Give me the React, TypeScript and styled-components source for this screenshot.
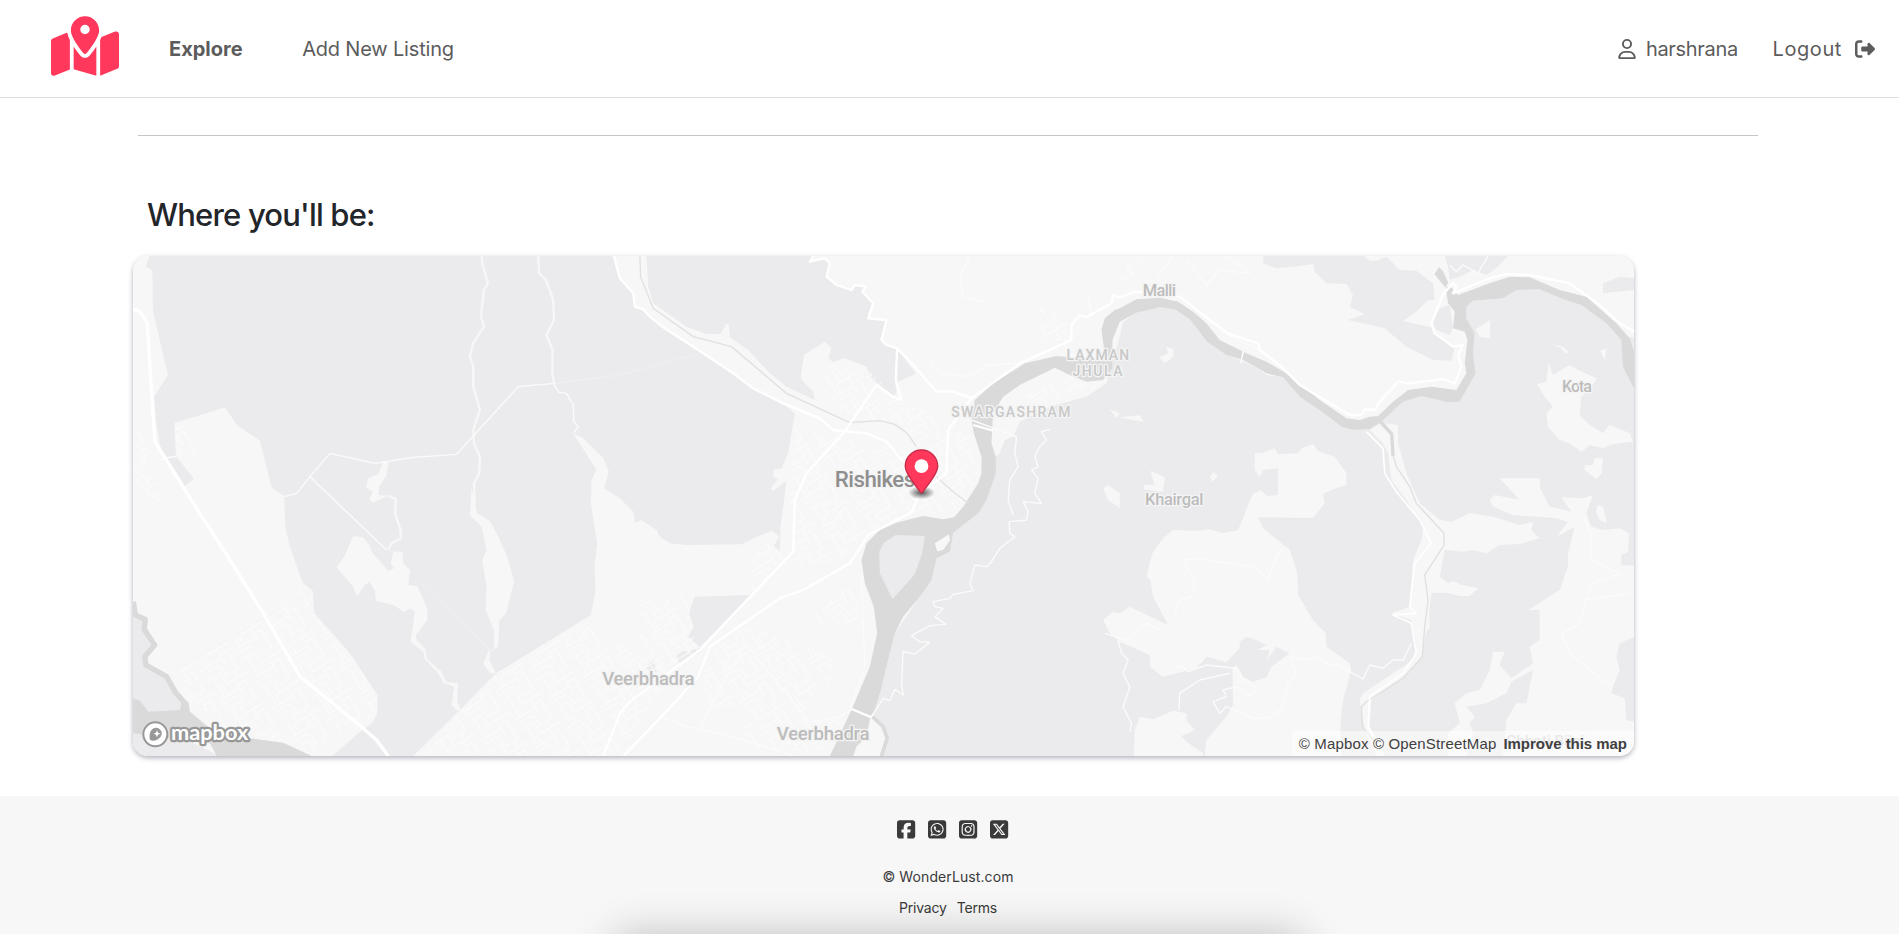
import React from "react";
import styled, { createGlobalStyle } from "styled-components";
import {
  FaMapLocationDot,
  FaRegUser,
  FaRightFromBracket,
  FaSquareFacebook,
  FaSquareInstagram,
  FaSquareWhatsapp,
  FaSquareXTwitter,
} from "react-icons/fa6";

const GlobalStyle = createGlobalStyle`
  *, *::before, *::after { box-sizing: border-box; }
  html, body { margin: 0; height: 100%; background: #fff; overflow: hidden; }
  body { font-family: Inter, "Liberation Sans", sans-serif; color: #222529; }
  a { color: inherit; text-decoration: none; }
`;

const Page = styled.div`
  position: relative;
  display: flex;
  flex-direction: column;
  height: 934px;
  overflow: hidden;
`;

const Navbar = styled.nav`
  display: flex;
  align-items: center;
  height: 98px;
  padding: 0 24px 0 51px;
  border-bottom: 1px solid #dfdfe0;
  background: #fff;
  flex: none;
`;

const Brand = styled.a`
  display: flex;
  width: 68px;
  height: 61px;
  margin: 0 50px 4px 0;
  color: #ff385c;
  svg { width: 68px; height: 61px; }
`;

const NavLink = styled.a<{ $bold?: boolean; $spacing?: number; $gap?: number }>`
  display: flex;
  align-items: center;
  gap: ${(p) => p.$gap ?? 0}px;
  font-size: 20px;
  line-height: 30px;
  font-weight: ${(p) => (p.$bold ? 700 : 400)};
  letter-spacing: ${(p) => p.$spacing ?? 0}px;
  color: #5c5c5c;
  white-space: nowrap;
  svg { width: 20px; height: 20px; flex: none; }
`;

const NavMain = styled.div`
  display: flex;
  gap: 59.5px;
`;

const NavAccount = styled.div`
  display: flex;
  gap: 34.5px;
  margin-left: auto;
`;

const Listing = styled.main`
  flex: none;
  height: 698px;
  padding: 37px 141px 0 133px;
`;

const Divider = styled.hr`
  margin: 0 0 0 5px;
  border: 0;
  border-top: 1px solid #c6c6c8;
`;

const Heading = styled.h3`
  margin: 59px 0 0 14px;
  height: 61px;
  font-size: 31px;
  line-height: 40px;
  font-weight: 500;
  letter-spacing: -0.82px;
  white-space: nowrap;
`;

const MapShadow = styled.div`
  width: 1501px;
  border-radius: 15px;
  box-shadow: 0 2px 5px rgba(40, 38, 70, 0.36);
`;

const MapCard = styled.div`
  position: relative;
  height: 500px;
  border-radius: 15px;
  overflow: hidden;
  background: #f7f7f7;
`;

const MapCanvas = styled.svg`
  display: block;
  width: 100%;
  height: 500px;
`;

const Attribution = styled.div`
  position: absolute;
  right: 0;
  bottom: 0;
  display: flex;
  align-items: center;
  justify-content: flex-end;
  gap: 7px;
  width: 342px;
  height: 25px;
  padding-right: 7px;
  background: rgba(255, 255, 255, 0.5);
  color: #404040;
  font: 15px/25px "Liberation Sans", sans-serif;
  white-space: nowrap;
`;

const Credit = styled.span`
  letter-spacing: 0.16px;
`;

const ImproveLink = styled.a`
  font-weight: 700;
  letter-spacing: -0.04px;
`;

const Footer = styled.footer`
  display: flex;
  flex-direction: column;
  align-items: center;
  flex: 1;
  padding-top: 23px;
  background: #f7f7f7;
  color: #3a3a3a;
  font-size: 14px;
`;

const Socials = styled.div`
  display: flex;
  gap: 12.8px;
  margin-left: 7px;
  svg { width: 18.2px; height: 20.8px; }
`;

const Copyright = styled.div`
  margin: 26px 3px 0 0;
  line-height: 22px;
  letter-spacing: 0.1px;
`;

const FooterLinks = styled.div`
  display: flex;
  gap: 10px;
  margin: 9px 3px 0 0;
  line-height: 22px;
  letter-spacing: -0.2px;
`;

const DockShadow = styled.div`
  position: absolute;
  left: 614px;
  top: 936px;
  width: 690px;
  height: 80px;
  border-radius: 16px;
  box-shadow: 0 0 44px rgba(0, 0, 0, 0.24);
`;

const forests = [
  // western forest
  "88,48 77,80 97,90 99,215 144,405 102,470 110,560 122,625 138,650 195,738 222,717 168,648 163,550 316,502 350,555 420,602 455,742 492,768 496,860 508,915 548,1028 578,1052 583,1120 690,1240 773,1366 772,1420 760,1445 735,1465 712,1482 637,1548 880,1548 1015,1415 1128,1300 1413,1125 1427,1050 1424,980 1432,910 1413,790 1415,720 1430,690 1360,580 1390,595 1450,655 1467,695 1452,745 1500,775 1540,815 1545,848 1565,840 1610,870 1620,890 1650,910 1700,915 1865,913 1910,890 1958,873 1978,890 1962,918 1980,932 1982,860 1990,800 2000,722 1960,752 1952,745 1975,718 1960,712 1962,688 1985,685 2005,640 2025,520 1990,490 1900,445 1840,400 1750,340 1630,260 1590,225 1545,195 1540,160 1500,115 1482,48",
  "1580,48 1585,140 1600,190 1700,260 1760,282 1803,282 1818,252 1826,252 1830,292 1885,330 1950,400 2000,440 2085,480 2080,455 2060,435 2042,415 2052,345 2115,305 2135,325 2125,355 2140,365 2175,355 2240,380 2255,415 2320,470 2330,455 2326,430 2388,400 2332,328 2300,315 2285,300 2300,240 2245,235 2260,190 2228,155 2238,140 2205,135 2195,150 2150,135 2120,110 2130,70 2115,55 2070,65 2080,48",
  // eastern forest
  "2280,1548 2302,1500 2295,1460 2262,1425 2285,1345 2300,1280 2325,1180 2400,1070 2450,955 2500,878 2600,780 2628,650 2640,640 2655,600 2680,590 2700,545 2790,500 2900,470 2960,430 3000,290 3010,245 3050,218 3120,202 3165,208 3210,238 3262,305 3320,345 3370,365 3415,385 3440,405 3490,412 3540,470 3620,525 3665,560 3700,570 3750,567 3785,545 3850,485 3905,468 3985,487 4020,485 4068,400 4060,345 4065,280 4040,235 4040,200 4060,182 4150,175 4190,150 4260,148 4330,178 4385,195 4460,250 4505,290 4545,292 4545,1548",
  "3431,48 3431,70 3470,85 3520,80 3580,72 3585,95 3620,130 3680,132 3700,165 3690,200 3735,222 3685,240 3795,265 3860,320 3940,360 3995,362 4005,322 3960,290 3935,262 3850,243 3890,215 3925,180 3945,180 3940,130 3890,92 3840,90 3800,50 3770,62 3750,62 3735,48",
  "3960,205 3990,195 4000,262 3990,285 3950,270 3938,250",
  "3975,48 4165,48 4130,85 4100,105 4060,90 4020,110 3990,120 3985,80",
  "4450,130 4500,110 4545,115 4545,150 4450,160",
  // pockets around Veerbhadra and the south-west corner
  "1725,1070 1890,1065 1740,1222 1705,1190 1722,1160 1707,1120",
  "1680,1270 1665,1250 1690,1232 1705,1235 1740,1222 1738,1240",
  "1575,1285 1600,1258 1612,1300",
  "39,1125 70,1135 104,1215 75,1250 78,1275 140,1310 165,1355 200,1390 200,1548 39,1548",
  "200,1500 300,1548 39,1548 39,1480",
];

const clearings = [
  "700,888 730,892 750,918 755,935 805,993 822,985 812,970 820,935 800,932 848,937 850,970 870,990 865,1035 892,1038 922,1105 922,1140 888,1185 890,1200 915,1225 922,1258 965,1295 978,1326 1014,1330 1012,1385 1022,1408 1012,1412 995,1395 1003,1340 972,1330 955,1300 915,1258 910,1235 872,1205 885,1112 870,1106 852,1115 820,1095 768,1082 765,1052 748,1025 730,1040 712,1072 700,1040 650,982 672,950",
  "1065,780 1070,820 1110,842 1130,880 1160,945 1183,1023 1158,1122 1138,1140 1135,1220 1110,1235 1108,1260 1128,1300 1110,1300 1090,1270 1105,1235 1122,1225 1122,1170 1097,1110 1100,1040 1087,960 1100,930 1085,860 1050,825 1055,745",
  "790,665 806,663 800,705 778,740 775,765 805,767 760,788 748,780 758,755 738,740 745,715 775,702",
  "3405,640 3425,640 3465,625 3475,643 3535,640 3545,625 3580,612 3595,633 3645,650 3680,700 3680,735 3640,748 3610,762 3615,790 3580,833 3415,832 3430,865 3510,930 3533,1000 3535,1065 3580,1140 3618,1180 3620,1220 3690,1270 3695,1290 3670,1380 3662,1450 3665,1548 3255,1548 3260,1500 3320,1430 3340,1395 3338,1285 3350,1275 3370,1310 3400,1325 3440,1312 3455,1280 3510,1240 3470,1220 3440,1262 3450,1230 3415,1230 3440,1215 3410,1200 3380,1190 3360,1205 3360,1225 3320,1267 3260,1250 3230,1285 3130,1310 3090,1280 3090,1245 3000,1205 2970,1180 2950,1140 2980,1115 3000,1120 3030,1100 3145,1155 3100,1070 3092,1020 3080,1008 3098,940 3130,895 3160,870 3230,872 3270,868 3310,880 3355,870 3400,760 3425,750 3440,768 3475,765 3475,685 3430,690 3420,710 3405,690",
  "3060,1430 3100,1438 3160,1412 3200,1420 3200,1440 3225,1470 3185,1488 3200,1505 3250,1540 3250,1548 3042,1548 3045,1470",
  "3750,570 3785,550 3835,555 3835,610 3860,700 3900,790 3960,840 3995,845 4050,820 4120,830 4200,855 4240,845 4235,870 4260,895 4200,912 4140,915 4100,940 4060,930 4030,935 3975,930 3960,1010 3985,1030 4000,1022 4025,1035 4075,1045 4050,1068 4020,1068 3985,1058 3935,1058 3928,1120 3930,1165 3920,1172 3905,1250 3850,1310 3755,1380 3750,1460 3800,1548 3770,1548 3735,1470 3720,1380 3730,1360 3880,1260 3890,1215 3875,1140 3815,1120 3870,1100 3880,960 3905,900 3910,860 3860,780 3815,720 3805,640 3790,610",
  "4110,780 4125,765 4200,780 4140,715 4260,715 4262,745 4290,800 4355,815 4325,772 4390,775 4420,765 4400,820 4415,860 4450,870 4500,865 4528,880 4525,935 4505,945 4505,975 4545,978 4545,1190 4500,1210 4490,1250 4500,1290 4480,1340 4475,1360 4515,1375 4520,1440 4545,1445 4545,1548 4150,1548 4160,1440 4190,1390 4220,1390 4240,1290 4175,1325 4160,1360 4100,1390 4040,1400 4065,1430 4050,1450 4060,1480 4040,1548 3985,1548 3985,1480 4020,1450 4005,1390 4040,1360 4080,1350 4110,1290 4120,1235 4155,1235 4140,1275 4175,1315 4240,1270 4230,1220 4260,1200 4260,1110 4225,1110 4320,1050 4345,980 4345,940 4365,860 4310,890 4345,845 4310,835 4290,833 4180,825 4120,800",
  "4286,370 4300,405 4350,375 4380,392 4432,415 4410,450 4385,470 4380,525 4410,555 4450,580 4470,555 4530,580 4540,605 4480,612 4450,625 4410,615 4385,635 4350,610 4320,600 4285,560 4280,520 4300,500 4275,470 4252,432 4280,425",
  "4425,655 4450,655 4446,700 4430,718 4395,690 4395,675 4420,675",
  "4068,268 4112,240 4110,295 4080,290",
  "4295,312 4330,320 4350,338 4335,338 4325,325",
  "4442,332 4460,325 4455,360",
  "4435,795 4450,800 4462,850 4440,840 4428,815",
  "3118,352 3145,340 3140,320 3162,328 3160,350 3135,370",
  "3000,532 3060,526 3072,545 3040,540",
  "3092,692 3135,712 3130,755 3070,748 3075,735 3105,735",
  "3270,710 3283,696 3294,710 3278,725",
  "2970,508 3000,520 2990,535",
  "2950,745 2965,735 3000,760 3000,805 2965,780",
];

const rivers = [
  "3000,205 2985,210 2955,235 2945,270 2952,320 2950,360 2810,348 2715,370 2620,430 2565,480 2555,540 2562,580 2585,650 2585,700 2575,730 2530,800 2503,832 2470,838 2410,828 2330,848 2280,870 2240,910 2225,960 2235,1030 2262,1100 2272,1180 2250,1280 2195,1410 2130,1548 2200,1548 2210,1520 2240,1490 2252,1430 2265,1410 2285,1345 2300,1280 2325,1180 2350,1130 2400,1070 2435,1020 2450,955 2490,935 2500,878 2575,820 2600,780 2628,700 2628,650 2615,610 2620,520 2650,470 2700,435 2805,383 2850,405 2900,425 2950,420 2978,385 2978,300 3000,245 3050,218 3120,202 3165,208 3210,238 3262,305 3320,345 3370,360 3415,385 3440,400 3490,412 3540,470 3620,525 3665,560 3700,570 3750,567 3785,545 3850,485 3905,468 3985,487 4020,485 4068,400 4060,345 4065,280 4040,235 4040,200 4060,182 4150,175 4190,150 4260,148 4330,178 4385,195 4460,250 4505,300 4510,380 4545,450 4545,340 4530,295 4490,250 4400,170 4320,150 4230,112 4170,110 4110,130 4015,165 3992,138 3978,142 3985,190 4005,215 4000,265 4035,275 4043,300 4035,370 4040,400 4010,450 3935,440 3865,450 3820,485 3775,528 3750,530 3720,540 3680,535 3600,480 3500,400 3440,365 3380,340 3300,300 3260,250 3220,215 3175,185 3120,173 3050,178",
  "3958,82 3970,94 3986,130 3976,142 3944,102",
  "39,1375 60,1382 85,1415 180,1410 185,1385 205,1385 210,1415 300,1490 390,1495 490,1508 575,1548 290,1548 270,1510 39,1480",
];

const streams = [
  "1085,48 1088,75 1104,130 1092,150 1083,230 1092,260 1060,310 1050,350 1060,380 1060,440 1080,510 1060,570 1062,610 1080,650 1078,700 1062,730 1065,790",
  "1255,48 1258,100 1278,120 1300,180 1302,240 1280,285 1298,330 1297,400 1305,440",
  "805,767 828,778 825,820 842,870 843,895 815,910 805,930",
];

const trails = [
  "1305,440 1318,457 1340,460 1360,495 1362,545 1375,560 1362,578",
  "492,770 530,760 570,710 630,640 765,670 880,652 1010,643 1195,440 1305,430",
  "570,710 672,808 800,930",
  "168,650 132,654 105,668",
  "2790,568 2765,575 2780,600 2760,620 2745,650 2755,680 2735,690 2755,715 2745,760 2765,790 2710,785 2725,815 2720,840 2668,845 2670,880 2685,890 2640,925 2615,965 2600,980 2565,975 2550,1030 2560,1052 2500,1063 2490,1075 2440,1085 2445,1100 2470,1105 2445,1130 2478,1153 2430,1157 2375,1187 2400,1205 2430,1207 2385,1242 2350,1235 2345,1330 2350,1365 2325,1348 2310,1382 2290,1375 2255,1430",
  "2555,540 2690,590 2685,640 2695,680 2670,720 2665,780 2680,825",
  "2225,1000 2235,1280 2190,1410 2160,1430 2050,1450",
  "1860,1170 1875,1210 2065,1440",
  "1875,1210 1740,1460",
  "1625,1430 1700,1460 1820,1485 1920,1515 2020,1548",
  "3160,1285 3190,1280 3205,1295 3260,1275 3350,1285 3370,1320 3400,1335 3410,1350 3395,1370 3350,1340 3310,1350 3320,1370 3280,1385 3300,1420 3320,1400 3400,1435 3450,1435 3490,1400 3505,1330 3530,1300 3510,1250 3560,1260 3590,1250 3630,1275 3660,1275 3690,1295 3730,1317 3750,1275 3790,1285 3820,1260 3850,1260 3875,1210",
  "2995,1200 3005,1240 3025,1260 3010,1300 3030,1340 3010,1400 3035,1450 3030,1475",
  "3190,960 3250,955 3290,965 3400,980 3445,1015 3470,950 3485,930",
  "3190,960 3225,1030 3215,1070 3180,1080 3160,1140",
  "2955,1180 3020,1200 3080,1150 3120,1170",
  "3178,1410 3180,1360 3240,1320 3330,1300",
  "4390,830 4415,880 4412,960 4500,1000 4420,1030 4400,1080 4530,1060",
  "4400,1080 4380,1150 4325,1180 4350,1240 4460,1330 4480,1330",
  "2835,300 2840,345 2930,350",
  "2905,170 2915,230",
  "2430,368 2460,400 2550,410 2600,375 2700,370",
  "3110,110 3160,48",
  "3200,60 3230,95 3260,135 3300,90 3390,100 3320,48",
  "3000,120 3040,105 3020,80 3070,60",
  "2550,48 2520,110 2530,170 2590,185",
  "3990,75 4010,95 4030,75 4075,100 4105,48",
  "3305,275 3420,330",
];

const roads = [
  "39,208 60,215 82,250 92,420 105,605 220,790 330,960 430,1120 540,1310 700,1440 770,1500 805,1548",
  "1482,48 1500,115 1540,160 1545,200 1570,208 1590,230 1630,262 1750,340 1840,400 1900,445 1990,490 2100,535 2140,570 2240,580 2300,605 2350,665",
  "2380,805 2370,820 2245,885 2190,970 2050,1050 1980,1075 1770,1220 1735,1310 1625,1430 1510,1548",
  "2270,435 2170,580 2060,700 2025,780 2020,935 1740,1230 1530,1385 1500,1420 1450,1548",
  "2380,805 2400,760 2480,700 2485,570 2555,475 2700,370 2800,325 2855,300 2855,255 2880,225 2900,232 2975,190 2980,165 3000,172 3045,155 3180,170 3225,205 3270,240 3325,280 3415,310 3420,330 3485,380 3540,435 3690,525 3725,525 3735,508 3765,510 3780,485 3835,425 3865,430 3970,417 4005,430 4025,380 4015,345 4030,315 4000,320 3945,280 3935,250 3955,200 3972,160 4000,130 4010,140 4000,160 4110,115 4160,102 4230,105 4350,130 4440,195 4500,250 4545,275",
  "2080,48 2070,65 2115,55 2130,70 2120,110 2150,135 2195,150 2205,135 2238,140 2228,155 2260,190 2245,235 2300,240 2285,300 2300,315 2332,325 2380,375 2450,455 2500,455 2555,475",
  "2332,325 2328,420 2345,480 2320,470 2270,435",
  "2560,555 2620,572",
  "2195,1407 2255,1432",
];

const valleyRoad =
  "3740,575 3790,625 3795,700 3830,755 3900,840 3935,910 3885,970 3870,1100 3890,1120 3820,1125 3875,1150 3890,1240 3850,1300 3750,1370 3745,1460 3790,1540";

const canals = [
  "1560,48 1562,110 1600,205 1720,290 1835,320 2000,460 2190,548 2280,542 2325,553 2360,578 2390,620",
  "2450,710 2500,755 2545,790",
  "3820,645 3830,680 3870,740 3890,790 3973,880 3973,915 3915,1005 3925,1080 3915,1160 3908,1250 3850,1315 3740,1385 3725,1400 3728,1460 3800,1548",
];

const towns = [
  "180,1290 545,1040 583,1125 690,1240 770,1370 765,1430 700,1450 560,1548 400,1480 280,1420 200,1390",
  "900,1548 1128,1310 1400,1150 1560,1250 1560,1080 1700,1060 1720,1190 1740,1230 1600,1380 1500,1548",
  "2025,560 2060,560 2180,600 2300,620 2390,640 2480,590 2550,560 2580,700 2500,820 2390,820 2240,880 2160,960 2020,980 2010,760",
  "2085,420 2110,380 2180,360 2240,385 2340,480 2480,540 2480,590 2400,600 2330,560 2150,510",
  "1880,960 1940,905 1975,935 2010,960 1900,1060",
  "1760,1250 1880,1160 2150,1250 2130,1330 2060,1380 2060,1440 2170,1440 2100,1540 1880,1520 1870,1400 1740,1400",
  "2060,1130 2190,1040 2225,1040 2220,1130 2150,1170",
  "2700,470 2850,410 2930,440 2780,490",
  "2755,310 2760,200 2850,230 2850,300",
  "44,570 85,560 90,660 125,770 125,810 44,720",
  "165,560 220,550 240,650 170,640",
];

const Label = styled.text<{ $tone?: string }>`
  font-family: Roboto, "Liberation Sans", sans-serif;
  font-weight: 500;
  fill: ${(p) => p.$tone ?? "#bcbcbc"};
  stroke: #f4f4f4;
  stroke-width: 8px;
  stroke-linejoin: round;
  paint-order: stroke;
`;

const Wordmark = styled.text`
  font-family: Lato, sans-serif;
  font-size: 64px;
  font-weight: 700;
  fill: #fff;
  stroke: #989898;
  stroke-width: 13px;
  stroke-linejoin: round;
  paint-order: stroke;
`;

const places = [
  { name: "Rishikesh", x: 2145, y: 741, size: 67, width: 277, tone: "#8f8f8f" },
  { name: "Veerbhadra", x: 1447, y: 1335, size: 56, width: 277 },
  { name: "Veerbhadra", x: 1971, y: 1499, size: 56, width: 278 },
  { name: "Malli", x: 3069, y: 168, size: 50, width: 100 },
  { name: "Kota", x: 4327, y: 457, size: 48, width: 90 },
  { name: "Khairgal", x: 3076, y: 796, size: 50, width: 175 },
  { name: "SWARGASHRAM", x: 2494, y: 532, size: 42, width: 358, tone: "#c8c8c8" },
  { name: "LAXMAN", x: 2840, y: 360, size: 42, width: 188, tone: "#c8c8c8" },
  { name: "JHULA", x: 2858, y: 408, size: 42, width: 150, tone: "#c8c8c8" },
  { name: "Chhoti Bijni", x: 4160, y: 1518, size: 46, width: 234, tone: "#d2d2d2" },
];

function TerrainMap() {
  return (
    <MapCanvas viewBox="39 48 4504 1500" preserveAspectRatio="none">
      <defs>
        <pattern id="streets" width="120" height="104" patternUnits="userSpaceOnUse" patternTransform="rotate(-32)">
          <path
            d="M0 14H46V52H120M20 14V82H74M46 30H98V0M74 52V104M98 66V104M0 82H20M58 0V30M74 70H98M32 52V82M84 30V52M0 96H50V104"
            fill="none"
            stroke="#fcfcfc"
            strokeWidth="3"
          />
        </pattern>
        <radialGradient id="pinShadow">
          <stop offset="0.1" stopColor="#000" stopOpacity="0.6" />
          <stop offset="1" stopColor="#000" stopOpacity="0" />
        </radialGradient>
      </defs>
      <rect x="39" y="48" width="4506" height="1500" fill="#f7f7f7" />
      <g fill="#ebebed">{forests.map((p) => <polygon key={p} points={p} />)}</g>
      <g fill="#f7f7f7">{clearings.map((p) => <polygon key={p} points={p} />)}</g>
      <g fill="url(#streets)">{towns.map((p) => <polygon key={p} points={p} />)}</g>
      <g fill="none" stroke="#f7f7f7" strokeWidth="7">
        {streams.map((p) => <polyline key={p} points={p} />)}
      </g>
      <g fill="#dadada">{rivers.map((p) => <polygon key={p} points={p} />)}</g>
      <polygon points="2278,935 2292,908 2328,885 2415,888 2407,940 2385,1003 2318,1078 2280,1000" fill="#ebebed" />
      <polygon points="2445,910 2487,883 2491,900 2470,930 2452,934" fill="#f7f7f7" />
      <polygon points="2255,1432 2240,1490 2210,1520 2202,1548 2280,1548 2298,1500 2290,1465" fill="#f7f7f7" />
      <g fill="none" stroke="#dadada" strokeLinejoin="round">
        <polyline points="40,1085 46,1125 76,1138 72,1168 104,1215 74,1250 78,1275 140,1310 165,1355 197,1392 197,1420" strokeWidth="16" />
        <polyline points="2258,1430 2290,1460 2302,1495 2285,1548" strokeWidth="11" />
        <polyline points="3783,546 3816,582 3820,648" strokeWidth="10" />
      </g>
      <g fill="none" stroke="#e0e0e0" strokeWidth="4">
        {canals.map((p) => <polyline key={p} points={p} />)}
      </g>
      <g fill="none" stroke="#fbfbfb" strokeWidth="4" strokeLinejoin="round">
        {trails.map((p) => <polyline key={p} points={p} />)}
        <path d="M1305 430 1500 405 1740 340M905 1030 1110 1230M580 1052 160 1290" strokeWidth="2" stroke="#f3f3f4" />
      </g>
      <g fill="none" stroke="#fff" strokeWidth="7" strokeLinejoin="round">
        {roads.map((p) => <polyline key={p} points={p} />)}
        <polyline points={valleyRoad} strokeWidth="5" />
        <polyline points={roads[0]} strokeWidth="10" />
        <polyline points="3371,333 3363,370" strokeWidth="4" />
      </g>
      {places.map((p) => (
        <Label key={p.name + p.x} x={p.x} y={p.y} fontSize={p.size} textLength={p.width} $tone={p.tone}>
          {p.name}
        </Label>
      ))}
      <ellipse cx="2405" cy="758" rx="40" ry="20" fill="url(#pinShadow)" />
      <g transform="translate(2354.4 628) scale(3.75)">
        <path
          d="M27 13.5C27 19.07 20.25 27 14.75 34.5 14.02 35.5 12.98 35.5 12.25 34.5 6.75 27 0 19.22 0 13.5 0 6.04 6.04 0 13.5 0S27 6.04 27 13.5Z"
          fill="#ff385c"
        />
        <path
          d="M26.5 13.5C26.5 18.9 19.9 26.6 14.35 34.2 13.8 34.9 13.2 34.9 12.65 34.2 7.1 26.6.5 18.9.5 13.5.5 6.3 6.3.5 13.5.5S26.5 6.3 26.5 13.5Z"
          fill="none"
          stroke="#000"
          strokeOpacity="0.22"
        />
        <circle cx="13.5" cy="13.5" r="5.5" fill="#fff" />
      </g>
      <circle cx="106" cy="1483" r="36" fill="#fff" stroke="#989898" strokeWidth="6" />
      <path d="M91 1499C87 1474 98 1463 111 1465 124 1468 128 1482 119 1492 111 1501 100 1502 91 1499Z" fill="#989898" stroke="#989898" strokeWidth="3" />
      <path d="M111 1470 114 1478 122 1481 114 1484 111 1492 108 1484 100 1481 108 1478Z" fill="#fff" />
      <Wordmark x="153" y="1500" textLength="232" lengthAdjust="spacingAndGlyphs">
        mapbox
      </Wordmark>
    </MapCanvas>
  );
}

export default function App() {
  return (
    <Page>
      <GlobalStyle />
      <Navbar>
        <Brand href="#"><FaMapLocationDot /></Brand>
        <NavMain>
          <NavLink href="#" $bold>Explore</NavLink>
          <NavLink href="#" $spacing={-0.18}>Add New Listing</NavLink>
        </NavMain>
        <NavAccount>
          <NavLink href="#" $gap={9} $spacing={-0.3}><FaRegUser />harshrana</NavLink>
          <NavLink href="#" $gap={13} $spacing={0.6}>Logout<FaRightFromBracket /></NavLink>
        </NavAccount>
      </Navbar>
      <Listing>
        <Divider />
        <Heading>Where you'll be:</Heading>
        <MapShadow>
          <MapCard>
            <TerrainMap />
            <Attribution>
              <Credit>© Mapbox © OpenStreetMap</Credit>
              <ImproveLink href="#">Improve this map</ImproveLink>
            </Attribution>
          </MapCard>
        </MapShadow>
      </Listing>
      <Footer>
        <Socials>
          <FaSquareFacebook />
          <FaSquareWhatsapp />
          <FaSquareInstagram />
          <FaSquareXTwitter />
        </Socials>
        <Copyright>© WonderLust.com</Copyright>
        <FooterLinks>
          <a href="#">Privacy</a>
          <a href="#">Terms</a>
        </FooterLinks>
      </Footer>
      <DockShadow />
    </Page>
  );
}
